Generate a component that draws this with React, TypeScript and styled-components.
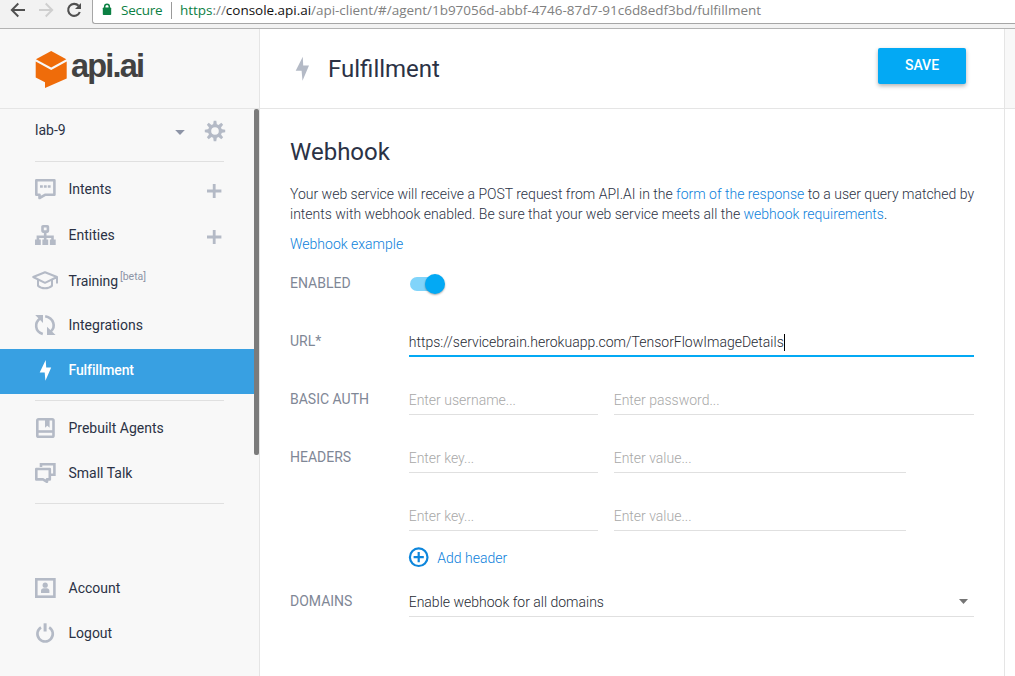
import React from "react";
import styled, { createGlobalStyle } from "styled-components";

const GlobalStyle = createGlobalStyle`
  * { box-sizing: border-box; }
  body { margin: 0; background: #fff; font-family: Roboto, "Liberation Sans", sans-serif; font-size: 14px; color: #2b3245; overflow: hidden; }
  svg { display: block; flex: none; }
`;

const Window = styled.div`
  width: 1015px;
  height: 676px;
  display: flex;
  flex-direction: column;
  overflow: hidden;
`;

/* Browser toolbar */
const Toolbar = styled.div`
  height: 29px;
  flex: none;
  display: flex;
  background: #f2f2f2;
  border-bottom: 1px solid #b3b3b3;
`;
const NavButtons = styled.div`
  width: 92px;
  flex: none;
`;
const AddressBar = styled.div`
  flex: 1;
  height: 24px;
  display: flex;
  padding-left: 9px;
  background: #fff;
  border-left: 1px solid #a6a6a6;
  border-bottom: 1px solid #a6a6a6;
  border-bottom-left-radius: 3px;
  font: 13.5px/20px "Open Sans", "Noto Sans", sans-serif;
  white-space: nowrap;
`;
const Secure = styled.span`
  width: 50px;
  margin-left: 8px;
  color: #0b8043;
  letter-spacing: -0.25px;
`;
const Separator = styled.span`
  width: 1px;
  height: 17px;
  margin: 2px 8px 0 0;
  background: #9a9a9a;
`;
const Address = styled.span`
  color: #808080;
  letter-spacing: -0.028px;
`;
const Scheme = styled.span`
  color: #0b8043;
`;
const Host = styled.span`
  color: #111;
`;

/* Page frame */
const Page = styled.div`
  flex: 1;
  display: flex;
  min-height: 0;
`;
const Sidebar = styled.aside`
  width: 260px;
  flex: none;
  background: #f8f8f8;
  border-right: 1px solid #e5e5e5;
`;
const Brand = styled.div`
  height: 80px;
  display: flex;
  padding: 22px 0 0 35px;
  border-bottom: 1px solid #e5e5e5;
`;
const BrandName = styled.span`
  margin-left: 3px;
  font: bold 32.5px/36px "Liberation Sans", Arial, sans-serif;
  letter-spacing: -1.8px;
  margin-top: -3px;
  color: #424242;
`;
const SidebarBody = styled.div`
  display: flex;
  justify-content: space-between;
`;
const Menu = styled.nav`
  width: 254px;
`;
const ScrollThumb = styled.div`
  width: 5px;
  height: 346px;
  border-radius: 2px;
  background: #7b7b7b;
`;
const AgentRow = styled.div`
  height: 52px;
  display: flex;
  padding-left: 35px;
`;
const AgentName = styled.span`
  width: 140px;
  line-height: 42px;
`;
const Divider = styled.hr<{ $before?: number; $after?: number }>`
  width: 189px;
  height: 1px;
  border: 0;
  margin: ${(p) => p.$before ?? 0}px 0 ${(p) => p.$after ?? 0}px 35px;
  background: #e0e0e0;
`;
const MenuItem = styled.a<{ $height?: number; $active?: boolean }>`
  height: ${(p) => p.$height ?? 45}px;
  display: flex;
  padding: 9px 32px 0 30px;
  color: ${(p) => (p.$active ? "#fff" : "#2b3245")};
  background: ${(p) => (p.$active ? "#38a0e2" : "transparent")};
  font-weight: ${(p) => (p.$active ? 500 : 400)};
`;
const MenuLabel = styled.span<{ $spacing?: number; $line?: number }>`
  flex: 1;
  padding-left: 8.5px;
  line-height: ${(p) => p.$line ?? 26}px;
  letter-spacing: ${(p) => p.$spacing ?? 0}px;
`;
const Beta = styled.sup`
  margin-left: 2px;
  font-size: 10.5px;
  line-height: 0;
  letter-spacing: 0;
  color: #8d94a6;
`;

/* Main column */
const Main = styled.main`
  width: 745px;
  flex: none;
  border-right: 1px solid #e5e5e5;
`;
const MainHeader = styled.header`
  height: 80px;
  display: flex;
  padding: 19px 38px 0 30px;
  border-bottom: 1px solid #e5e5e5;
`;
const Title = styled.h1`
  flex: 1;
  margin: 0 0 0 8px;
  font-size: 24px;
  line-height: 42px;
  font-weight: 400;
`;
const SaveButton = styled.button`
  width: 88px;
  height: 36px;
  padding: 0 0 2px;
  border: 0;
  border-radius: 2px;
  background: #03a9f4;
  box-shadow: 0 2px 4px rgba(0, 0, 0, 0.3);
  color: #fff;
  font: 500 14px Roboto, sans-serif;
`;
const RightGutter = styled.div`
  flex: 1;
`;
const GutterHeader = styled.div`
  height: 80px;
  background: #f8f8f8;
  border-bottom: 1px solid #e5e5e5;
`;
const Content = styled.section`
  padding: 26px 30px 0;
  font-weight: 300;
`;
const Heading = styled.h2`
  margin: 0;
  font-size: 24px;
  line-height: 34px;
  font-weight: 400;
`;
const Intro = styled.p`
  margin: 15px 0 0;
  line-height: 20px;
  white-space: nowrap;
`;
const IntroLine = styled.span`
  display: block;
  letter-spacing: -0.005px;
`;
const Link = styled.a`
  color: #0d7fdb;
`;
const ExampleLink = styled(Link)`
  display: block;
  margin-top: 10px;
  line-height: 20px;
`;
const Row = styled.div<{ $height?: number }>`
  height: ${(p) => p.$height ?? 58}px;
  display: flex;
  align-items: flex-end;
`;
const Label = styled.label`
  width: 119px;
  flex: none;
  padding-bottom: 6px;
  line-height: 20px;
  font-weight: 400;
  color: #7f8796;
`;
const Toggle = styled.div`
  width: 36px;
  height: 20px;
  display: flex;
  align-items: center;
  margin-bottom: 5px;
`;
const ToggleTrack = styled.div`
  width: 34px;
  height: 14px;
  display: flex;
  align-items: center;
  justify-content: flex-end;
  margin-left: 1px;
  border-radius: 7px;
  background: #81d4fa;
`;
const ToggleThumb = styled.div`
  width: 20px;
  height: 20px;
  flex: none;
  margin-right: -1px;
  border-radius: 50%;
  background: #03a9f4;
  box-shadow: 0 1px 2px rgba(0, 0, 0, 0.35);
`;
const Field = styled.div<{ $width: number; $focused?: boolean; $empty?: boolean }>`
  width: ${(p) => p.$width}px;
  height: 30px;
  flex: none;
  display: flex;
  margin-right: 16px;
  line-height: 20px;
  padding-top: 5px;
  text-indent: -0.3px;
  color: ${(p) => (p.$empty ? "#a8a8a8" : "#262a33")};
  border-bottom: ${(p) => (p.$focused ? "2px solid #03a9f4" : "1px solid #e0e0e0")};
`;
const Caret = styled.span`
  width: 1px;
  height: 17px;
  margin-top: 2px;
  background: #000;
`;
const AddHeader = styled.div`
  height: 54px;
  display: flex;
  padding: 16px 0 0 118px;
  line-height: 22px;
`;
const AddLabel = styled(Link)`
  margin-left: 8.3px;
`;
const SelectValue = styled.span`
  flex: 1;
`;

const GREY = "#b4bac6";

const Icon = ({ children, color = GREY }: { children: React.ReactNode; color?: string }) => (
  <svg width="30" height="26" viewBox="0 0 30 26" fill="none" stroke={color} strokeWidth="2.6">
    {children}
  </svg>
);

const IntentsIcon = () => (
  <Icon>
    <path d="M6.3 5.3H24.4V19.7H15.5L9.5 23V19.7H6.3Z" strokeLinejoin="round" />
    <path d="M10 11.5h2.8M13.9 11.5h2.8M17.8 11.5h2.8" />
  </Icon>
);
const EntitiesIcon = () => (
  <Icon>
    <rect x="12.5" y="5.2" width="5.4" height="5.4" rx=".5" />
    <path d="M15.2 11v5M7.9 20v-4.2h14.6V20M15.2 15v5" />
    <path d="M5 18.5h5.8V24H5zM12.4 18.5h5.8V24h-5.8zM19.9 18.5h5.8V24h-5.8z" fill={GREY} stroke="none" />
  </Icon>
);
const TrainingIcon = () => (
  <Icon>
    <g strokeWidth="2" strokeLinejoin="round">
      <path d="M3.2 10 15 5.2 27 10 15 15.8ZM27 10v6.5" />
      <path d="M8 13v5.8c3.5 3.4 10.5 3.4 14 0V13" />
    </g>
  </Icon>
);
const IntegrationsIcon = () => (
  <Icon>
    <path d="M10 5.5C4.5 9.5 4.5 18.5 12.8 20.9M15.2 3.3c8.6 1.6 11 10.6 5.5 15.2" />
    <path d="M5.2 2H13v8zM17 22h8.6L17 13.8z" fill={GREY} stroke="none" />
  </Icon>
);
const BoltIcon = () => (
  <Icon>
    <path d="M15.7 2 9.7 14.4h5L15.4 22.7 21.2 9.4h-5z" fill="#fff" stroke="none" />
  </Icon>
);
const PrebuiltIcon = () => (
  <Icon>
    <rect x="7.3" y="4.3" width="16.2" height="17.4" rx="1.3" />
    <path d="M7 16.5h16" />
    <path d="M15 5v7.8l2.3-2 2.3 2V5z" fill={GREY} stroke="none" />
  </Icon>
);
const SmallTalkIcon = () => (
  <Icon>
    <path d="M11 7V4.3h13.4v10.4H21" />
    <path d="M6.3 9H19.8V19.4H17v2.4l-4-2.4H6.3Z" strokeLinejoin="round" />
  </Icon>
);
const AccountIcon = () => (
  <Icon>
    <rect x="6.3" y="4.3" width="18.1" height="17.4" />
    <circle cx="15.2" cy="10.2" r="2.6" fill={GREY} stroke="none" />
    <path d="M11 18v-2.2c0-1.6 1.2-2.4 2.6-2.6h3.2c1.4.2 2.6 1 2.6 2.6V18z" fill={GREY} stroke="none" />
  </Icon>
);
const LogoutIcon = () => (
  <Icon>
    <path d="M11 7.3a7.7 7.7 0 1 0 8.2 0" />
    <path d="M15.1 3.3v8.2" strokeWidth="3" />
  </Icon>
);
const PlusIcon = () => (
  <svg width="15" height="26" viewBox="0 0 15 26">
    <path d="M0 16h14.4M7.2 9v14" stroke={GREY} strokeWidth="2.8" />
  </svg>
);
const GearIcon = () => (
  <svg width="22" height="22" viewBox="-11 -11 22 22" fill="none" stroke={GREY}>
    <circle r="5.4" strokeWidth="3.2" />
    {[0, 45, 90, 135, 180, 225, 270, 315].map((angle) => (
      <path key={angle} d="M-1.9 -6 -1.3 -10.2H1.3L1.9 -6Z" fill={GREY} transform={`rotate(${angle})`} stroke="none" />
    ))}
  </svg>
);
const LogoIcon = () => (
  <svg width="33" height="38" viewBox="0 0 33 38" fill="#ef6c0a">
    <path d="M16.2 0 31.3 8.2 16.2 16.6.9 8.2z" />
    <path d="M.7 10.6 16.2 19 31.7 10.6V27.5L10 37V31.3L.7 26.6z" />
  </svg>
);
const NavIcons = () => (
  <svg width="92" height="24" viewBox="0 0 92 24" fill="none" strokeWidth="1.9">
    <path d="M25 10H12M18.3 3.5 11.8 10l6.5 6.5" stroke="#505050" />
    <path d="M39 10h13M45.7 3.5l6.5 6.5-6.5 6.5" stroke="#cfcfcf" />
    <path d="M78.6 5.8A6 6 0 1 0 79.8 12" stroke="#505050" strokeWidth="2.1" />
    <path d="M81 3v6h-6z" fill="#505050" />
  </svg>
);
const LockIcon = () => (
  <svg width="11" height="20" viewBox="0 0 11 20">
    <path d="M2.7 8V6.6a2.3 2.3 0 0 1 4.6 0V8" fill="none" stroke="#0b8043" strokeWidth="1.5" />
    <rect x=".8" y="7.4" width="8.4" height="7.6" rx=".8" fill="#0b8043" />
  </svg>
);

export default function App() {
  return (
    <Window>
      <GlobalStyle />
      <Toolbar>
        <NavButtons>
          <NavIcons />
        </NavButtons>
        <AddressBar>
          <LockIcon />
          <Secure>Secure</Secure>
          <Separator />
          <Address>
            <Scheme>https</Scheme>://<Host>console.api.ai</Host>
            /api-client/#/agent/1b97056d-abbf-4746-87d7-91c6d8edf3bd/fulfillment
          </Address>
        </AddressBar>
      </Toolbar>
      <Page>
        <Sidebar>
          <Brand>
            <LogoIcon />
            <BrandName>api.ai</BrandName>
          </Brand>
          <SidebarBody>
            <Menu>
              <AgentRow>
                <AgentName>lab-9</AgentName>
                <svg width="29" height="44" viewBox="0 0 29 44">
                  <path d="M.2 21h9.6L5 26z" fill="#8d94a6" />
                </svg>
                <svg width="22" height="44" viewBox="0 0 22 44">
                  <g transform="translate(0 11)">
                    <GearIcon />
                  </g>
                </svg>
              </AgentRow>
              <Divider $after={4} />
              <MenuItem $height={46}>
                <IntentsIcon />
                <MenuLabel $line={28}>Intents</MenuLabel>
                <PlusIcon />
              </MenuItem>
              <MenuItem $height={46}>
                <EntitiesIcon />
                <MenuLabel $line={28}>Entities</MenuLabel>
                <PlusIcon />
              </MenuItem>
              <MenuItem $height={46}>
                <TrainingIcon />
                <MenuLabel $line={28} $spacing={-0.08}>
                  Training<Beta>[beta]</Beta>
                </MenuLabel>
              </MenuItem>
              <MenuItem>
                <IntegrationsIcon />
                <MenuLabel $line={24}>Integrations</MenuLabel>
              </MenuItem>
              <MenuItem $active>
                <BoltIcon />
                <MenuLabel $line={24} $spacing={-0.12}>Fulfillment</MenuLabel>
              </MenuItem>
              <Divider $before={6} $after={5} />
              <MenuItem>
                <PrebuiltIcon />
                <MenuLabel>Prebuilt Agents</MenuLabel>
              </MenuItem>
              <MenuItem>
                <SmallTalkIcon />
                <MenuLabel>Small Talk</MenuLabel>
              </MenuItem>
              <Divider $before={7} $after={62} />
              <MenuItem>
                <AccountIcon />
                <MenuLabel>Account</MenuLabel>
              </MenuItem>
              <MenuItem>
                <LogoutIcon />
                <MenuLabel>Logout</MenuLabel>
              </MenuItem>
            </Menu>
            <ScrollThumb />
          </SidebarBody>
        </Sidebar>
        <Main>
          <MainHeader>
            <svg width="30" height="40" viewBox="0 0 30 40">
              <path d="M12.8 8.7 5.7 22.8h5.9L12.5 32.7 19 17.5h-5.8z" fill={GREY} />
            </svg>
            <Title>Fulfillment</Title>
            <SaveButton>SAVE</SaveButton>
          </MainHeader>
          <Content>
            <Heading>Webhook</Heading>
            <Intro>
              <IntroLine>
                Your web service will receive a POST request from API.AI in the <Link>form of the response</Link> to a user query matched by
              </IntroLine>
              <IntroLine>
                intents with webhook enabled. Be sure that your web service meets all the <Link>webhook requirements</Link>.
              </IntroLine>
            </Intro>
            <ExampleLink>Webhook example</ExampleLink>
            <Row $height={45}>
              <Label>ENABLED</Label>
              <Toggle>
                <ToggleTrack>
                  <ToggleThumb />
                </ToggleTrack>
              </Toggle>
            </Row>
            <Row>
              <Label>URL*</Label>
              <Field $width={565} $focused>
                https://servicebrain.herokuapp.com/TensorFlowImageDetails
                <Caret />
              </Field>
            </Row>
            <Row>
              <Label>BASIC AUTH</Label>
              <Field $width={189} $empty>Enter username...</Field>
              <Field $width={360} $empty>Enter password...</Field>
            </Row>
            <Row>
              <Label>HEADERS</Label>
              <Field $width={189} $empty>Enter key...</Field>
              <Field $width={292} $empty>Enter value...</Field>
            </Row>
            <Row>
              <Label />
              <Field $width={189} $empty>Enter key...</Field>
              <Field $width={292} $empty>Enter value...</Field>
            </Row>
            <AddHeader>
              <svg width="21" height="21" viewBox="0 0 21 21" fill="none" stroke="#0d86dc">
                <circle cx="10.7" cy="10.2" r="8.8" strokeWidth="2.2" />
                <path d="M5.6 10.2h10.2M10.7 5.1v10.2" strokeWidth="2.2" />
              </svg>
              <AddLabel>Add header</AddLabel>
            </AddHeader>
            <Row $height={32}>
              <Label>DOMAINS</Label>
              <Field $width={565}>
                <SelectValue>Enable webhook for all domains</SelectValue>
                <svg width="16" height="20" viewBox="0 0 16 20">
                  <path d="M1 7h9L5.5 12z" fill="#757575" />
                </svg>
              </Field>
            </Row>
          </Content>
        </Main>
        <RightGutter>
          <GutterHeader />
        </RightGutter>
      </Page>
    </Window>
  );
}
